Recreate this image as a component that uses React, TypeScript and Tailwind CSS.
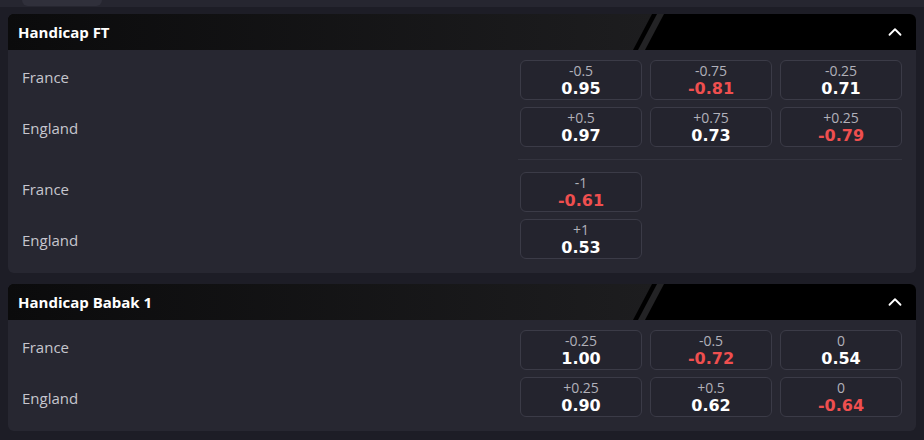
import React from 'react';
import { ChevronUp } from 'lucide-react';

type Odd = { line: string; price: string };

interface MarketRow {
  team: string;
  odds: Odd[];
}

interface Market {
  title: string;
  groups: MarketRow[][];
}

const markets: Market[] = [
  {
    title: 'Handicap FT',
    groups: [
      [
        {
          team: 'France',
          odds: [
            { line: '-0.5', price: '0.95' },
            { line: '-0.75', price: '-0.81' },
            { line: '-0.25', price: '0.71' },
          ],
        },
        {
          team: 'England',
          odds: [
            { line: '+0.5', price: '0.97' },
            { line: '+0.75', price: '0.73' },
            { line: '+0.25', price: '-0.79' },
          ],
        },
      ],
      [
        { team: 'France', odds: [{ line: '-1', price: '-0.61' }] },
        { team: 'England', odds: [{ line: '+1', price: '0.53' }] },
      ],
    ],
  },
  {
    title: 'Handicap Babak 1',
    groups: [
      [
        {
          team: 'France',
          odds: [
            { line: '-0.25', price: '1.00' },
            { line: '-0.5', price: '-0.72' },
            { line: '0', price: '0.54' },
          ],
        },
        {
          team: 'England',
          odds: [
            { line: '+0.25', price: '0.90' },
            { line: '+0.5', price: '0.62' },
            { line: '0', price: '-0.64' },
          ],
        },
      ],
    ],
  },
];

const OddButton: React.FC<{ odd: Odd }> = ({ odd }) => {
  const negative = odd.price.startsWith('-');
  return (
    <button className="h-10 rounded-md border border-[#3b3b47] bg-[#24242e] flex flex-col items-center justify-center leading-none">
      <span className="text-[14px] text-[#b1b1ba] font-['Open_Sans',sans-serif]">{odd.line}</span>
      <span
        className={`mt-[3px] text-[16px] font-bold font-['DejaVu_Sans',sans-serif] ${
          negative ? 'text-[#ef4f4f]' : 'text-white'
        }`}
      >
        {odd.price}
      </span>
    </button>
  );
};

// header background with the slanted stripe near the right
const HeaderDeco = () => (
  <svg className="absolute inset-0" width="100%" height="36">
    <defs>
      <linearGradient id="hdrfade" x1="0" x2="1" y1="0" y2="0">
        <stop offset="0" stopColor="#0b0b0c" />
        <stop offset="1" stopColor="#1d1d1f" />
      </linearGradient>
    </defs>
    <polygon points="0,0 644,0 625,36 0,36" fill="url(#hdrfade)" />
    <polygon points="649,0 656,0 637,36 630,36" fill="#232325" />
  </svg>
);

const MarketCard: React.FC<{ market: Market }> = ({ market }) => (
  <div className="mx-2 rounded-md bg-[#272731] overflow-hidden">
    <div className="relative h-9 bg-black flex items-center justify-between pl-[10px] pr-[10px]">
      <HeaderDeco />
      <span className="relative text-[15px] font-bold text-white">{market.title}</span>
      <ChevronUp className="relative text-white" size={22} strokeWidth={2} />
    </div>
    <div className="pt-[10px] pb-[14px]">
      {market.groups.map((group, gi) => (
        <div key={gi}>
          {gi > 0 && (
            <div className="flex justify-end pr-[14px] py-[12px]">
              <div className="w-[384px] h-px bg-[#33333e]" />
            </div>
          )}
          <div className="flex flex-col gap-[7px]">
            {group.map((row, ri) => (
              <div key={ri} className="flex items-center">
                <span
                  className={`flex-1 pl-[14px] text-[15px] font-medium text-[#c6c6ce] ${ri === 0 ? 'pb-[5px]' : 'pt-[3px]'}`}
                >
                  {row.team}
                </span>
                <div className="w-[382px] mr-[14px] grid grid-cols-3 gap-2">
                  {row.odds.map((odd, oi) => (
                    <OddButton key={oi} odd={odd} />
                  ))}
                </div>
              </div>
            ))}
          </div>
        </div>
      ))}
    </div>
  </div>
);

export default function App() {
  return (
    <div className="w-[924px] h-[440px] bg-[#1d1d26] font-['Open_Sans',sans-serif] overflow-hidden">
      <div className="h-[7px] bg-[#262630] pl-[22px]">
        <div className="w-20 h-[6px] rounded-b-lg bg-[#30303b]" />
      </div>
      <div className="pt-[7px] flex flex-col gap-[11px]">
        {markets.map((m, i) => (
          <MarketCard key={i} market={m} />
        ))}
      </div>
    </div>
  );
}
